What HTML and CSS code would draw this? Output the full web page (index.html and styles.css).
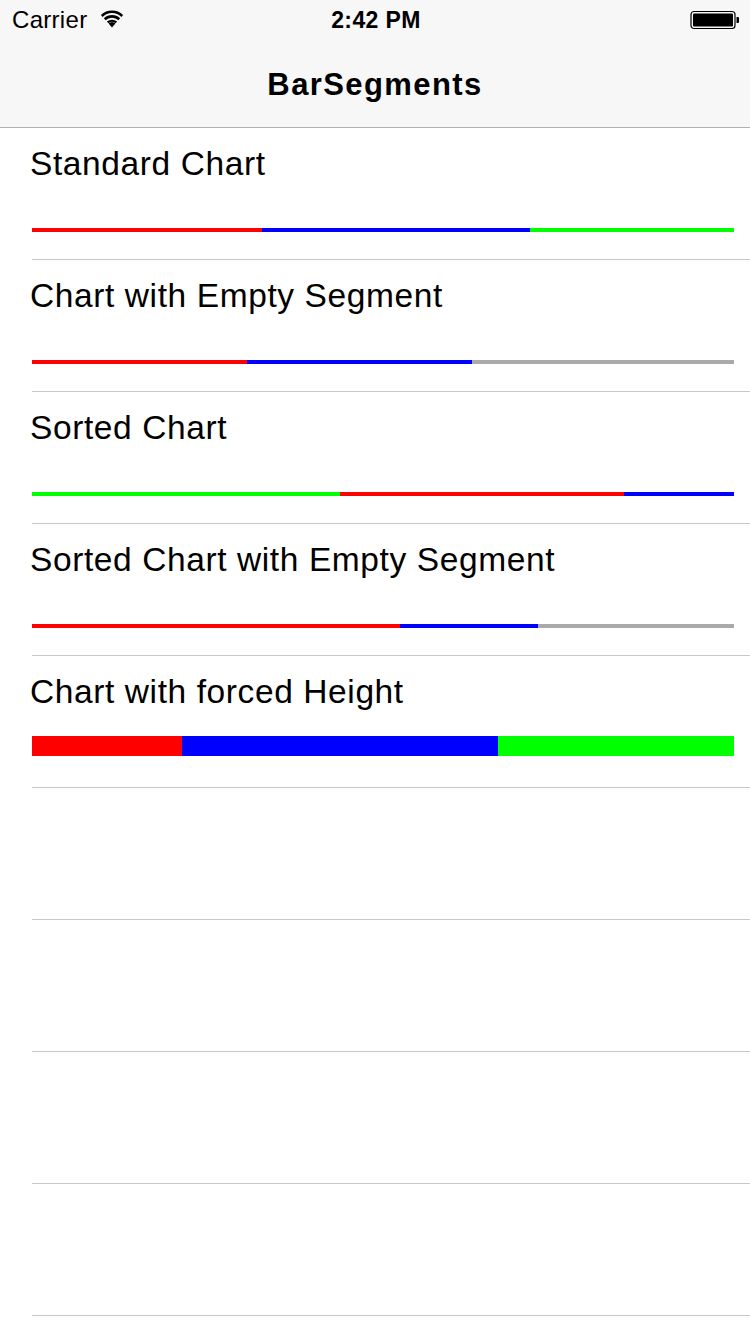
FILE: index.html
```html
<!DOCTYPE html>
<html>
<head>
<meta charset="utf-8">
<link rel="stylesheet" href="styles.css">
</head>
<body>
<div class="screen">
  <header class="topbar">
    <div class="status">
      <div class="status-left">
        <span class="carrier">Carrier</span>
        <svg class="wifi" width="24" height="18" viewBox="0 0 24 18">
          <path d="M12 17.5 L8.6 13.6 A5 5 0 0 1 15.4 13.6 Z" fill="#000"/>
          <path d="M6.9 11.6 A7.6 7.6 0 0 1 17.1 11.6 L15.6 13.3 A5.4 5.4 0 0 0 8.4 13.3 Z" fill="#000"/>
          <path d="M3.9 8.3 A11.8 11.8 0 0 1 20.1 8.3 L18.4 10.2 A9.3 9.3 0 0 0 5.6 10.2 Z" fill="#000"/>
          <path d="M0.9 5.0 A16 16 0 0 1 23.1 5.0 L21.4 6.9 A13.5 13.5 0 0 0 2.6 6.9 Z" fill="#000"/>
        </svg>
      </div>
      <div class="time">2:42 PM</div>
      <div class="status-right">
        <svg class="battery" width="50" height="20" viewBox="0 0 50 20">
          <rect x="1" y="1.5" width="44" height="17" rx="3" ry="3" fill="none" stroke="#000" stroke-width="1.2"/>
          <rect x="3" y="3.5" width="40" height="13" rx="1.2" fill="#000"/>
          <path d="M46.5 7 h1.5 a1 1 0 0 1 1 1 v4 a1 1 0 0 1 -1 1 h-1.5 z" fill="#000"/>
        </svg>
      </div>
    </div>
    <div class="navbar"><h1 class="title">BarSegments</h1></div>
  </header>
  <main class="list">
    <div class="cell">
      <div class="label">Standard Chart</div>
      <div class="bar thin">
        <span class="seg red" style="flex:230"></span><span class="seg blue" style="flex:268"></span><span class="seg green" style="flex:204"></span>
      </div>
    </div>
    <div class="cell">
      <div class="label">Chart with Empty Segment</div>
      <div class="bar thin">
        <span class="seg red" style="flex:215"></span><span class="seg blue" style="flex:225"></span><span class="seg gray" style="flex:262"></span>
      </div>
    </div>
    <div class="cell">
      <div class="label">Sorted Chart</div>
      <div class="bar thin">
        <span class="seg green" style="flex:308"></span><span class="seg red" style="flex:284"></span><span class="seg blue" style="flex:110"></span>
      </div>
    </div>
    <div class="cell">
      <div class="label">Sorted Chart with Empty Segment</div>
      <div class="bar thin">
        <span class="seg red" style="flex:368"></span><span class="seg blue" style="flex:138"></span><span class="seg gray" style="flex:196"></span>
      </div>
    </div>
    <div class="cell">
      <div class="label">Chart with forced Height</div>
      <div class="bar thick">
        <span class="seg red" style="flex:150"></span><span class="seg blue" style="flex:316"></span><span class="seg green" style="flex:236"></span>
      </div>
    </div>
    <div class="cell empty"></div>
    <div class="cell empty"></div>
    <div class="cell empty"></div>
    <div class="cell empty"></div>
  </main>
</div>
</body>
</html>
```
FILE: styles.css
```css
* { box-sizing: border-box; }
html, body {
  margin: 0;
  padding: 0;
  background: #ffffff;
  font-family: "Liberation Sans", Arial, sans-serif;
  color: #000;
}
.screen {
  width: 750px;
  height: 1334px;
  overflow: hidden;
  background: #fff;
}
.topbar {
  background: #f7f7f7;
  border-bottom: 1px solid #b2b2b2;
  height: 128px;
}
.status {
  height: 40px;
  display: flex;
  align-items: center;
  justify-content: space-between;
  padding: 0 10px 0 12px;
}
.status-left {
  display: flex;
  align-items: center;
  gap: 13px;
  width: 200px;
}
.carrier {
  font-size: 24px;
  line-height: 40px;
  letter-spacing: 0.3px;
}
.wifi { margin-top: -2px; }
.time {
  font-size: 23px;
  font-weight: bold;
  line-height: 40px;
  letter-spacing: 0.4px;
}
.status-right {
  width: 200px;
  display: flex;
  justify-content: flex-end;
}
.battery { display: block; }
.navbar {
  height: 87px;
  display: flex;
  align-items: center;
  justify-content: center;
}
.title {
  margin: 3px 0 0 0;
  font-size: 31px;
  font-weight: bold;
  letter-spacing: 1.4px;
}
.list {
  display: flex;
  flex-direction: column;
}
.cell {
  height: 132px;
  margin-left: 32px;
  border-bottom: 1px solid #c8c7cc;
  padding: 16px 16px 0 0;
  display: flex;
  flex-direction: column;
}
.label {
  font-size: 33.5px;
  line-height: 40px;
  margin-left: -2px;
  letter-spacing: 0.6px;
}
.bar {
  display: flex;
  width: 702px;
}
.bar.thin {
  height: 4px;
  margin-top: 44px;
}
.bar.thick {
  height: 20px;
  margin-top: 24px;
}
.seg { display: block; height: 100%; }
.red { background: #ff0000; }
.blue { background: #0000ff; }
.green { background: #00ff00; }
.gray { background: #aaaaaa; }
```
